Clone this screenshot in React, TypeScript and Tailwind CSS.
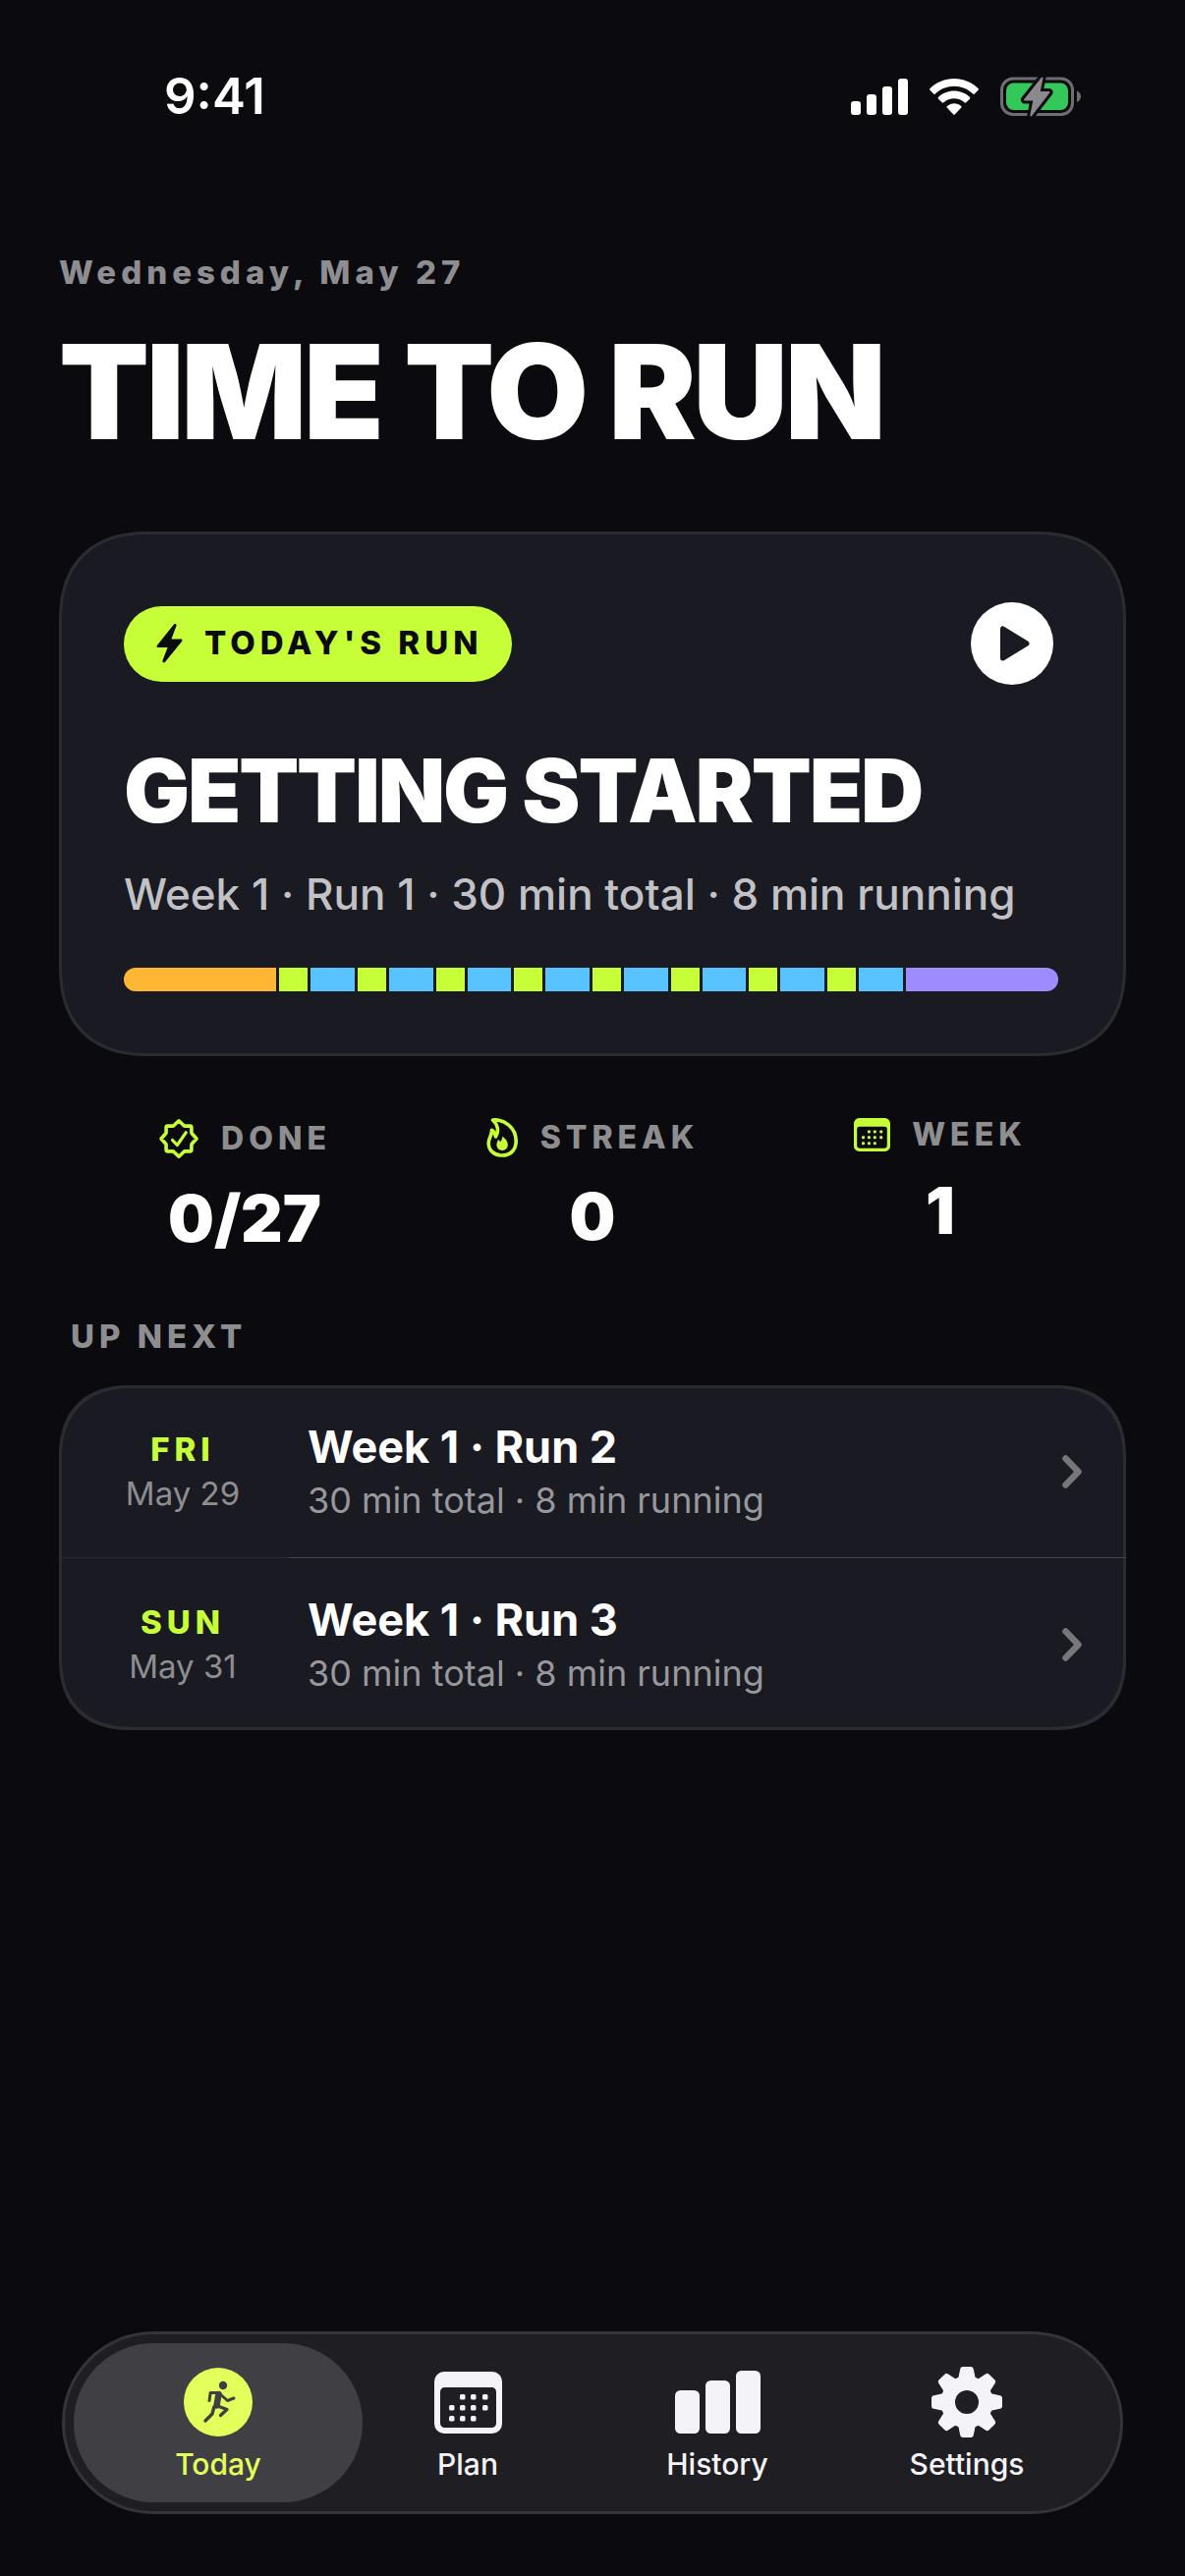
import { useState } from "react"
import type { ReactNode } from "react"

type Segment = { kind: "warmup" | "run" | "walk" | "cooldown"; weight: number }

const segmentColors: Record<Segment["kind"], string> = {
  warmup: "bg-[#ffb733]",
  run: "bg-[#c6ff38]",
  walk: "bg-[#58c4ff]",
  cooldown: "bg-[#9e8cff]",
}

const intervals: Segment[] = Array.from({ length: 8 }).flatMap(() => [
  { kind: "run", weight: 29 } as Segment,
  { kind: "walk", weight: 45 } as Segment,
])

const segments: Segment[] = [{ kind: "warmup", weight: 156 }, ...intervals, { kind: "cooldown", weight: 156 }]

const upNext = [
  { day: "FRI", date: "May 29", title: "Week 1 · Run 2", detail: "30 min total · 8 min running" },
  { day: "SUN", date: "May 31", title: "Week 1 · Run 3", detail: "30 min total · 8 min running" },
]

function SignalIcon() {
  return (
    <svg className="h-[37px] w-[58px]" viewBox="0 0 58 37" fill="currentColor" aria-hidden="true">
      <rect x="0" y="23" width="10" height="14" rx="3" />
      <rect x="16" y="16" width="10" height="21" rx="3" />
      <rect x="32" y="8" width="10" height="29" rx="3" />
      <rect x="48" y="0" width="10" height="37" rx="3" />
    </svg>
  )
}

function WifiIcon() {
  return (
    <svg className="h-[37px] w-[50px]" viewBox="0 0 50 37" fill="currentColor" aria-hidden="true">
      <path d="M25 0c9.300 0 18 3.700 24.500 10a1.300 1.300 0 0 1 0 1.800l-3.600 3.700a1.300 1.300 0 0 1-1.800 0C39 10.600 32.200 7.800 25 7.800S11 10.600 5.900 15.500a1.300 1.300 0 0 1-1.800 0L.5 11.800a1.300 1.300 0 0 1 0-1.800C7 3.700 15.700 0 25 0z" />
      <path d="M25 12.600c6 0 11.600 2.300 15.900 6.200a1.300 1.300 0 0 1 0 1.900l-3.600 3.600a1.300 1.300 0 0 1-1.800 0 15.600 15.600 0 0 0-21 0 1.300 1.300 0 0 1-1.800 0l-3.600-3.600a1.300 1.300 0 0 1 0-1.900C13.400 14.900 19 12.600 25 12.600z" />
      <path d="M25 25.300c2.700 0 5.200 1 7.100 2.600a1.200 1.200 0 0 1 0 1.800l-6.200 6.500a1.200 1.200 0 0 1-1.800 0l-6.200-6.500a1.200 1.200 0 0 1 0-1.800 11 11 0 0 1 7.100-2.600z" />
    </svg>
  )
}

function BatteryIcon() {
  const bolt = "M42.500 1.500 25 23.500h9.500l-3.200 16L49.500 16H39.500z"
  return (
    <svg className="h-[41px] w-[83px]" viewBox="0 0 83 41" fill="none" aria-hidden="true">
      <rect x="1.500" y="2" width="72" height="36.500" rx="11.500" stroke="#6e6e71" strokeWidth="3" />
      <path d="M78 14.500c2.500 1 4 3.200 4 5.700s-1.500 4.700-4 5.700z" fill="#6e6e71" />
      <rect x="6" y="6.500" width="63" height="27.500" rx="7.500" fill="#34c759" />
      <path d={bolt} stroke="#0a0a0f" strokeWidth="8" strokeLinejoin="round" />
      <path d={bolt} fill="#8a8a8e" stroke="#8a8a8e" strokeWidth="2" strokeLinejoin="round" />
    </svg>
  )
}

function BoltIcon() {
  return (
    <svg className="h-10 w-[27px]" viewBox="0 0 27 40" fill="currentColor" aria-hidden="true">
      <path d="M17.800.7 1 21.800c-.9 1.200-.4 2.300 1 2.300h9.600L6.500 37.300c-.7 1.900 1.200 3.100 2.600 1.500L26 17.900c.9-1.200.4-2.300-1-2.300h-9.600L20.400 2.200C21.100.3 19.200-.9 17.800.7z" />
    </svg>
  )
}

function PlayIcon() {
  return (
    <svg className="size-[84px]" viewBox="0 0 84 84" aria-hidden="true">
      <circle cx="42" cy="42" r="42" fill="#fff" />
      <path
        d="M32.500 27v30L57 42z"
        fill="#1a1a22"
        stroke="#1a1a22"
        strokeWidth="5"
        strokeLinejoin="round"
      />
    </svg>
  )
}

function SealIcon() {
  return (
    <svg
      className="size-[42px]"
      viewBox="0 0 42 42"
      fill="none"
      stroke="currentColor"
      strokeWidth="3.600"
      strokeLinecap="round"
      strokeLinejoin="round"
      aria-hidden="true"
    >
      <path d="M21 2.800 26 7.500q.5.600 1.300.6h5q1.600 0 1.600 1.600v5q0 .8.600 1.300L39 21l-4.500 5q-.6.500-.6 1.300v5q0 1.600-1.600 1.600h-5q-.8 0-1.300.6L21 39.200l-5-4.700q-.5-.6-1.300-.6h-5q-1.600 0-1.600-1.600v-5q0-.8-.6-1.300L3 21l4.500-5q.6-.5.600-1.300v-5q0-1.600 1.600-1.600h5q.8 0 1.300-.6z" />
      <path d="M14.500 22.500 19.300 27.500 28.200 14.800" strokeWidth="3.200" />
    </svg>
  )
}

function FlameIcon() {
  return (
    <svg className="h-10 w-[33px]" viewBox="0 0 33 40" fill="none" aria-hidden="true">
      <path
        d="M6.500 2C18 1 30.200 9.500 30.200 23.500 30.200 32.500 24.500 38 16 38S2.200 32.500 2.200 25.500C2.200 20 5.800 18 5.500 12.200 8 14 9.200 16.500 9.500 19 13.200 13.500 11.500 6.500 6.500 2z"
        stroke="currentColor"
        strokeWidth="3.600"
        strokeLinejoin="round"
      />
      <path
        d="M16.200 18.500c4 3 5.600 5.500 5.600 8.800s-2.300 5.700-5.600 5.700-5.800-2.400-5.800-5.700c0-2.200 1.200-3.300 1.500-5.300 1.300.6 1.800 1.300 2.100 2.200 1.600-1.500 2.400-3.400 2.200-5.700z"
        fill="currentColor"
      />
    </svg>
  )
}

function CalendarIcon({ className }: { className: string }) {
  return (
    <svg className={className} viewBox="0 0 69 63" fill="currentColor" aria-hidden="true">
      <path
        fillRule="evenodd"
        d="M10 0h49a10 10 0 0 1 10 10v43a10 10 0 0 1-10 10H10A10 10 0 0 1 0 53V10A10 10 0 0 1 10 0zM10.500 16A4.500 4.500 0 0 0 6 20.500v32a4.500 4.500 0 0 0 4.500 4.500h48a4.500 4.500 0 0 0 4.500-4.500v-32a4.500 4.500 0 0 0-4.500-4.500z"
      />
      {[
        [26, 23],
        [37, 23],
        [49, 23],
        [15, 34],
        [26, 34],
        [37, 34],
        [49, 34],
        [15, 45],
        [26, 45],
        [37, 45],
      ].map(([x, y]) => (
        <rect key={`${x}-${y}`} x={x} y={y} width="5.500" height="5.500" rx="1.500" />
      ))}
    </svg>
  )
}

function RunnerIcon() {
  return (
    <svg className="size-[70px]" viewBox="0 0 70 70" aria-hidden="true">
      <circle cx="35" cy="35" r="35" fill="currentColor" />
      <circle cx="40" cy="18" r="4.200" fill="#403f44" />
      <g fill="none" stroke="#403f44" strokeLinecap="round" strokeLinejoin="round">
        <path d="M26 33.500 27.200 25.500H35.500L44.500 33.500 51 31" strokeWidth="3" />
        <path d="M35.500 27 33.500 38.500" strokeWidth="6.500" />
        <path d="M34.500 39 44 42.500 37.500 48.500" strokeWidth="3.400" />
        <path d="M30.800 40 29 47 22 54" strokeWidth="3.400" />
      </g>
    </svg>
  )
}

function BarsIcon() {
  return (
    <svg className="h-[64px] w-[87px]" viewBox="0 0 87 64" fill="currentColor" aria-hidden="true">
      <rect x="0" y="20" width="25" height="44" rx="5.500" />
      <rect x="31" y="10" width="25" height="54" rx="5.500" />
      <rect x="62" y="0" width="25" height="64" rx="5.500" />
    </svg>
  )
}

function GearIcon() {
  const angles = [0, 45, 90, 135, 180, 225, 270, 315]
  return (
    <svg className="size-[72px]" viewBox="0 0 72 72" fill="currentColor" aria-hidden="true">
      <path fillRule="evenodd" d="M36 9.500a26.500 26.500 0 1 1 0 53 26.500 26.500 0 0 1 0-53zM36 24a12 12 0 1 0 0 24 12 12 0 0 0 0-24z" />
      {angles.map((a) => (
        <path
          key={a}
          d="M32 0h8c1.600 0 2.500.9 2.800 2.400l1.700 8c.3 1.500 1 2 2 1.600L46 16H26l-.5-4c1 .4 1.700-.1 2-1.600l1.700-8C29.500.9 30.400 0 32 0z"
          transform={`rotate(${a} 36 36)`}
        />
      ))}
    </svg>
  )
}

function ChevronIcon() {
  return (
    <svg
      className="h-[38px] w-[20px] text-[#77777b]"
      viewBox="0 0 20 38"
      fill="none"
      stroke="currentColor"
      strokeWidth="6.500"
      strokeLinecap="round"
      strokeLinejoin="round"
      aria-hidden="true"
    >
      <path d="M3.500 5.500 16.500 19 3.500 32.500" />
    </svg>
  )
}

function Stat({ icon, label, value }: { icon: ReactNode; label: string; value: string }) {
  return (
    <div className="flex flex-1 flex-col items-center">
      <dt className="flex items-center gap-[22px] text-[32px] leading-8 font-extrabold tracking-[5px] text-[#8e8e91]">
        <span className="text-[#c6ff38]">{icon}</span>
        {label}
      </dt>
      <dd className="mt-5 text-[66px] leading-[80px] font-black">{value}</dd>
    </div>
  )
}

const tabs = [
  { name: "Today", icon: <RunnerIcon /> },
  { name: "Plan", icon: <CalendarIcon className="h-[63px] w-[69px]" /> },
  { name: "History", icon: <BarsIcon /> },
  { name: "Settings", icon: <GearIcon /> },
]

export default function App() {
  const [activeTab, setActiveTab] = useState("Today")

  return (
    <div className="flex min-h-screen flex-col bg-[#0a0a0f] font-[Inter,sans-serif] text-white">
      <div className="flex items-center justify-between pt-[68px] pr-[105px] pl-[167px] leading-[60px]">
        <span className="text-[51px] font-semibold">9:41</span>
        <div className="flex items-center gap-[22px]">
          <SignalIcon />
          <WifiIcon />
          <BatteryIcon />
        </div>
      </div>

      <main className="px-[60px]">
        <header className="pt-[129px]">
          <p className="text-[33px] leading-10 font-extrabold tracking-[5px] text-[#8e8e91]">Wednesday, May 27</p>
          <h1 className="mt-[41px] text-[134px] leading-[120px] font-black tracking-tight">TIME TO RUN</h1>
        </header>

        <section className="mt-[83px] rounded-[92px] border-[3px] border-[#2b2b32] bg-[#1a1a22] px-[63px] pt-[69px] pb-[63px] [corner-shape:superellipse(1.25)]">
          <div className="flex items-center justify-between pr-2">
            <span className="flex h-[77px] items-center gap-[22px] rounded-full bg-[#c6ff38] pr-[30px] pl-[33px] text-[33px] font-extrabold tracking-[5px] text-[#0a0a0f]">
              <BoltIcon />
              TODAY'S RUN
            </span>
            <button type="button" aria-label="Start run" className="rounded-full">
              <PlayIcon />
            </button>
          </div>
          <h2 className="mt-[60px] text-[89px] leading-[96px] font-black tracking-tight">GETTING STARTED</h2>
          <p className="mt-8 text-[44px] leading-[50px] font-medium text-[#c2c2c6]">
            Week 1 · Run 1 · 30 min total · 8 min running
          </p>
          <div className="mt-[50px] mr-[3px] flex h-6 gap-[3px] overflow-hidden rounded-full">
            {segments.map((segment, i) => (
              <div key={i} className={`basis-0 ${segmentColors[segment.kind]}`} style={{ flexGrow: segment.weight }} />
            ))}
          </div>
        </section>

        <dl className="mt-[63px] flex items-start px-3">
          <Stat icon={<SealIcon />} label="DONE" value="0/27" />
          <Stat icon={<FlameIcon />} label="STREAK" value="0" />
          <Stat icon={<CalendarIcon className="h-[34px] w-[37px]" />} label="WEEK" value="1" />
        </dl>

        <section className="mt-[60px]">
          <h3 className="pl-3 text-[33px] leading-10 font-extrabold tracking-[5px] text-[#8e8e91]">UP NEXT</h3>
          <ul className="mt-[30px] rounded-[74px] bg-[#1a1a22] inset-ring-3 inset-ring-[#2b2b32] [corner-shape:superellipse(1.25)]">
            {upNext.map((run, i) => (
              <li key={run.day}>
                {i > 0 && (
                  <div className="flex h-px">
                    <div className="w-[234px] bg-[#2b2b32]" />
                    <div className="flex-1 bg-[#46464b]" />
                  </div>
                )}
                <a href="#" className="flex h-[175px] items-center pr-[45px] pl-[66px]">
                  <span className="flex w-[120px] flex-col items-center leading-[45px]">
                    <span className="text-[33px] font-extrabold tracking-[5px] text-[#c6ff38]">{run.day}</span>
                    <span className="text-[33px] text-[#8e8e91]">{run.date}</span>
                  </span>
                  <span className="ml-[67px] flex flex-1 flex-col">
                    <span className="text-[45px] leading-[58px] font-bold">{run.title}</span>
                    <span className="text-[36px] leading-[50px] text-[#98989c]">{run.detail}</span>
                  </span>
                  <ChevronIcon />
                </a>
              </li>
            ))}
          </ul>
        </section>
      </main>

      <nav className="mx-[63px] mt-auto mb-[63px] flex rounded-full border-[3px] border-[#34343d] bg-[#1f1f23] px-[29px] py-[9px]">
        {tabs.map((tab) => (
          <button
            key={tab.name}
            type="button"
            aria-current={activeTab === tab.name ? "page" : undefined}
            onClick={() => setActiveTab(tab.name)}
            className={`-mx-5 flex h-[162px] flex-1 flex-col items-center rounded-full pt-6 ${
              activeTab === tab.name ? "bg-[#403f44] text-[#e3ff5c]" : "text-[#f4f3f8]"
            }`}
          >
            <span className="flex h-[72px] items-center">{tab.icon}</span>
            <span className="mt-[7px] text-[30px] leading-10 font-medium">{tab.name}</span>
          </button>
        ))}
      </nav>
    </div>
  )
}
